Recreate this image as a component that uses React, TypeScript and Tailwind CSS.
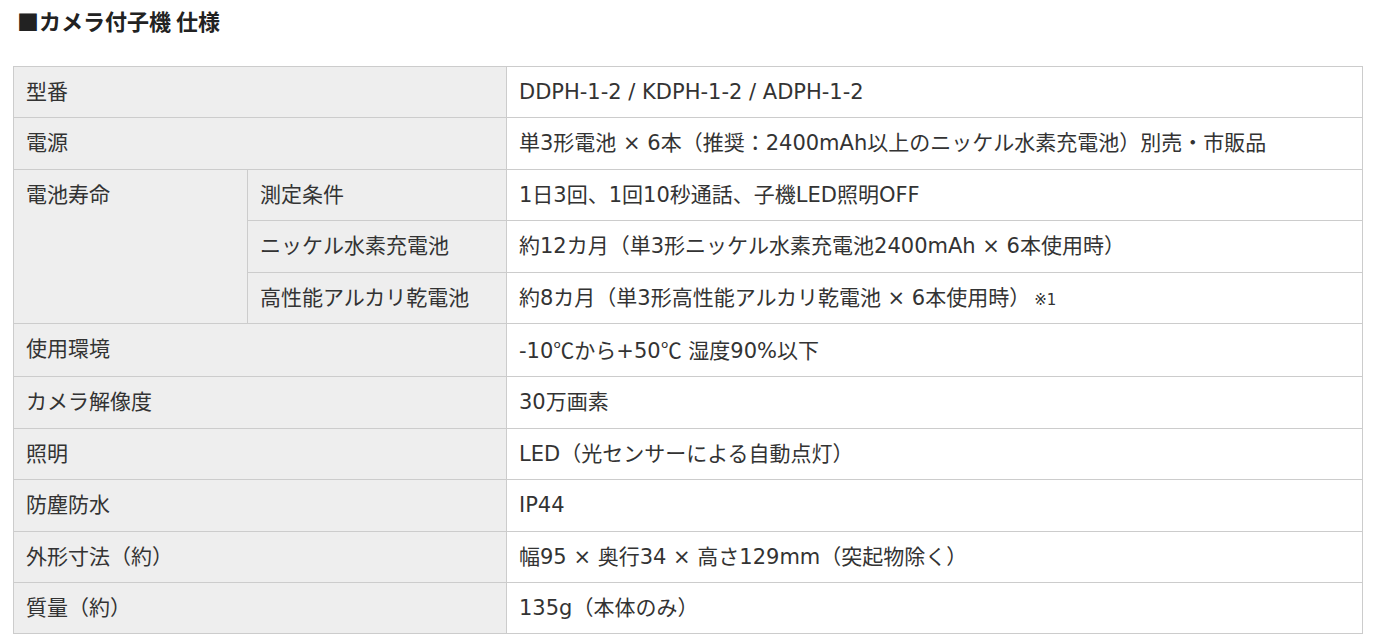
const cjk = '"Noto Sans CJK JP", sans-serif';

const Deg = () => <span style={{ fontFamily: cjk }}>℃</span>;

const rows: { label: string; value: React.ReactNode }[] = [
  { label: '型番', value: 'DDPH-1-2 / KDPH-1-2 / ADPH-1-2' },
  { label: '電源', value: '単3形電池 × 6本（推奨：2400mAh以上のニッケル水素充電池）別売・市販品' },
];

const after: { label: string; value: React.ReactNode }[] = [
  {
    label: '使用環境',
    value: (
      <>
        -10<Deg />から+50<Deg /> 湿度90%以下
      </>
    ),
  },
  { label: 'カメラ解像度', value: '30万画素' },
  { label: '照明', value: 'LED（光センサーによる自動点灯）' },
  { label: '防塵防水', value: 'IP44' },
  { label: '外形寸法（約）', value: '幅95 × 奥行34 × 高さ129mm（突起物除く）' },
  { label: '質量（約）', value: '135g（本体のみ）' },
];

const battery = [
  { label: '測定条件', value: '1日3回、1回10秒通話、子機LED照明OFF' },
  { label: 'ニッケル水素充電池', value: '約12カ月（単3形ニッケル水素充電池2400mAh × 6本使用時）' },
  {
    label: '高性能アルカリ乾電池',
    value: (
      <>
        約8カ月（単3形高性能アルカリ乾電池 × 6本使用時）<span className="ml-1 text-[15px] leading-none">※1</span>
      </>
    ),
  },
];

const th = 'border border-[#cccccc] bg-[#eeeeee] px-3 py-3 text-left align-top font-normal';
const td = 'border border-[#cccccc] bg-white px-3 py-3 align-top';

export default function App() {
  return (
    <div
      className="min-h-screen bg-white text-[#333333]"
      style={{ fontFamily: '"DejaVu Sans", "Noto Sans CJK JP", sans-serif' }}
    >
      <h2
        className="pl-[17px] pt-[5px] text-[22px] font-bold leading-[30px] text-[#222222]"
        style={{ fontFamily: cjk }}
      >
        ■カメラ付子機 仕様
      </h2>
      <table className="ml-[13px] mt-[31px] w-[1350px] border-collapse text-[21px] leading-[26.4px]">
        <colgroup>
          <col className="w-[234px]" />
          <col className="w-[259px]" />
          <col />
        </colgroup>
        <tbody>
          {rows.map((r) => (
            <tr key={r.label}>
              <th colSpan={2} className={th}>{r.label}</th>
              <td className={td}>{r.value}</td>
            </tr>
          ))}
          {battery.map((b, i) => (
            <tr key={b.label}>
              {i === 0 && (
                <th rowSpan={3} className={th}>電池寿命</th>
              )}
              <th className={th}>{b.label}</th>
              <td className={td}>{b.value}</td>
            </tr>
          ))}
          {after.map((r) => (
            <tr key={r.label}>
              <th colSpan={2} className={th}>{r.label}</th>
              <td className={td}>{r.value}</td>
            </tr>
          ))}
        </tbody>
      </table>
    </div>
  );
}
